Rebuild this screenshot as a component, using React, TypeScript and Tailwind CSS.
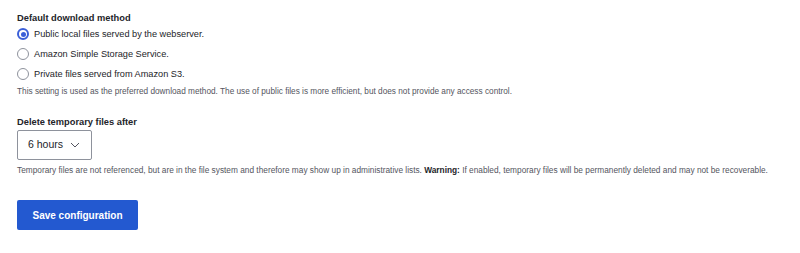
import React, { useState } from "react"

const options = [
  "Public local files served by the webserver.",
  "Amazon Simple Storage Service.",
  "Private files served from Amazon S3.",
]

export default function App() {
  const [method, setMethod] = useState(0)

  return (
    <div className="min-h-[253px] bg-white px-[17px] pt-[12px] text-[#232429] font-['Liberation_Sans',sans-serif]">
      <div>
        <div className="text-[9.3px] font-bold leading-[12px]">Default download method</div>
        <div className="mt-[4px] flex flex-col gap-[8px]">
          {options.map((label, i) => (
            <label key={label} className="flex h-[12px] items-center gap-[5px] cursor-pointer" onClick={() => setMethod(i)}>
              {method === i ? (
                <span className="flex h-[12px] w-[12px] items-center justify-center rounded-full border-[2px] border-[#3b5fd8]">
                  <span className="h-[5px] w-[5px] rounded-full bg-[#3b5fd8]" />
                </span>
              ) : (
                <span className="h-[12px] w-[12px] rounded-full border border-[#8e929c]" />
              )}
              <span className="text-[9.2px] leading-[12px]">{label}</span>
            </label>
          ))}
        </div>
        <p className="mt-[7px] text-[8.25px] leading-[10px] text-[#545560]">
          This setting is used as the preferred download method. The use of public files is more efficient, but does not provide any access control.
        </p>
      </div>

      <div className="mt-[19px]">
        <div className="text-[9.3px] font-bold leading-[12px]">Delete temporary files after</div>
        <div className="mt-[2px] flex h-[30px] w-[75px] items-center justify-between rounded-[2px] border border-[#8e929c] pl-[10px] pr-[11px]">
          <span className="text-[10.5px]">6 hours</span>
          <svg width="10" height="6" viewBox="0 0 10 6" fill="none">
            <path d="M1 1l4 4 4-4" stroke="#545560" strokeWidth="1" />
          </svg>
        </div>
        <p className="mt-[5px] text-[8.3px] leading-[10px] text-[#545560]">
          Temporary files are not referenced, but are in the file system and therefore may show up in administrative lists.{" "}
          <strong className="font-bold text-[#232429]">Warning:</strong> If enabled, temporary files will be permanently deleted and may not be recoverable.
        </p>
      </div>

      <button className="mt-[25px] h-[30px] w-[121px] rounded-[2px] bg-[#2359d0] text-[10px] font-bold text-white">
        Save configuration
      </button>
    </div>
  )
}
